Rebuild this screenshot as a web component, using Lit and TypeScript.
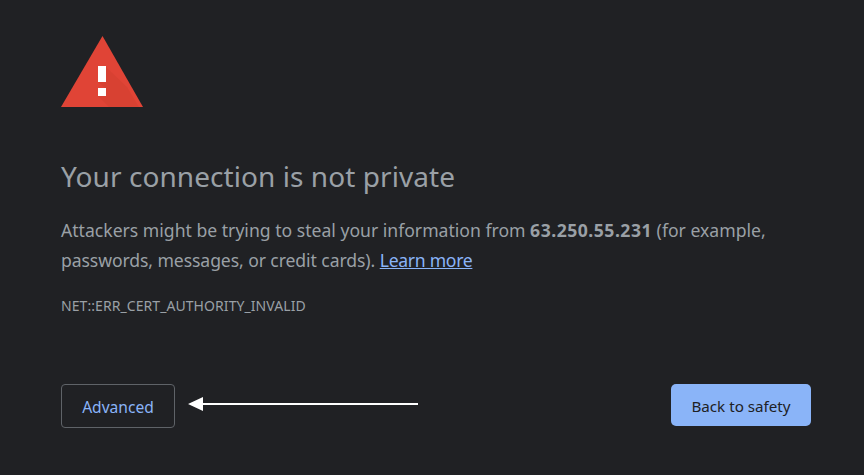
import { LitElement, html, css } from "lit";
import { customElement } from "lit/decorators.js";

@customElement("app-root")
export class AppRoot extends LitElement {
  static styles = css`
    :host { display: block; width: 864px; height: 475px; background: #202124; font-family: "Noto Sans", "Open Sans", sans-serif; color: #9aa0a6; overflow: hidden; }
    .page { box-sizing: border-box; height: 475px; padding: 36px 53px 0 61px; display: flex; flex-direction: column; }
    .icon { display: block; width: 83px; height: 71px; }
    h1 { margin: 51px 0 0; font-size: 28px; line-height: 36px; font-weight: 400; color: #9aa0a6; letter-spacing: 0.07px; }
    p { margin: 21px 0 0; font-size: 17.6px; line-height: 30px; width: 740px; }
    b { font-weight: 700; letter-spacing: 0.5px; }
    .tight { letter-spacing: -0.09px; }
    a { color: #8ab4f8; text-decoration: underline; letter-spacing: -0.3px; }
    .code { margin-top: 22px; font-size: 14px; line-height: 18px; letter-spacing: 0.07px; }
    .actions { margin-top: 69px; display: flex; justify-content: space-between; align-items: flex-start; }
    .left { display: flex; align-items: center; gap: 13px; }
    .adv { box-sizing: border-box; width: 114px; height: 44px; padding-top: 2px; border: 1px solid #5f6368; border-radius: 4px; display: flex; align-items: center; justify-content: center; color: #8ab4f8; font-size: 15.6px; }
    .arrow { display: block; margin-top: -4px; }
    .back { box-sizing: border-box; width: 140px; height: 42px; padding-top: 2px; border-radius: 5px; background: #8ab4f8; color: #202124; font-size: 15.2px; display: flex; align-items: center; justify-content: center; }
  `;
  render() {
    return html`<div class="page">
      <svg class="icon" viewBox="0 0 83 71">
        <path d="M41.5 0 82 71H0Z" fill="#e04436"/>
        <path d="M45 31H37V46L44 52H37V60L48 71H78L66 51Z" fill="#d23f31" opacity=".6"/>
        <rect x="37" y="30" width="8" height="16" fill="#fff"/>
        <rect x="37" y="52" width="8" height="8" fill="#fff"/>
      </svg>
      <h1>Your connection is not private</h1>
      <p>Attackers might be trying to steal your information from <b>63.250.55.231</b> (for example, <span class="tight">passwords, messages, or credit cards).</span> <a>Learn more</a></p>
      <div class="code">NET::ERR_CERT_AUTHORITY_INVALID</div>
      <div class="actions">
        <div class="left">
          <div class="adv">Advanced</div>
          <svg class="arrow" width="230" height="14" viewBox="0 0 230 14"><path d="M0 7 15 0V6H230V8H15V14Z" fill="#fff"/></svg>
        </div>
        <div class="back">Back to safety</div>
      </div>
    </div>`;
  }
}
